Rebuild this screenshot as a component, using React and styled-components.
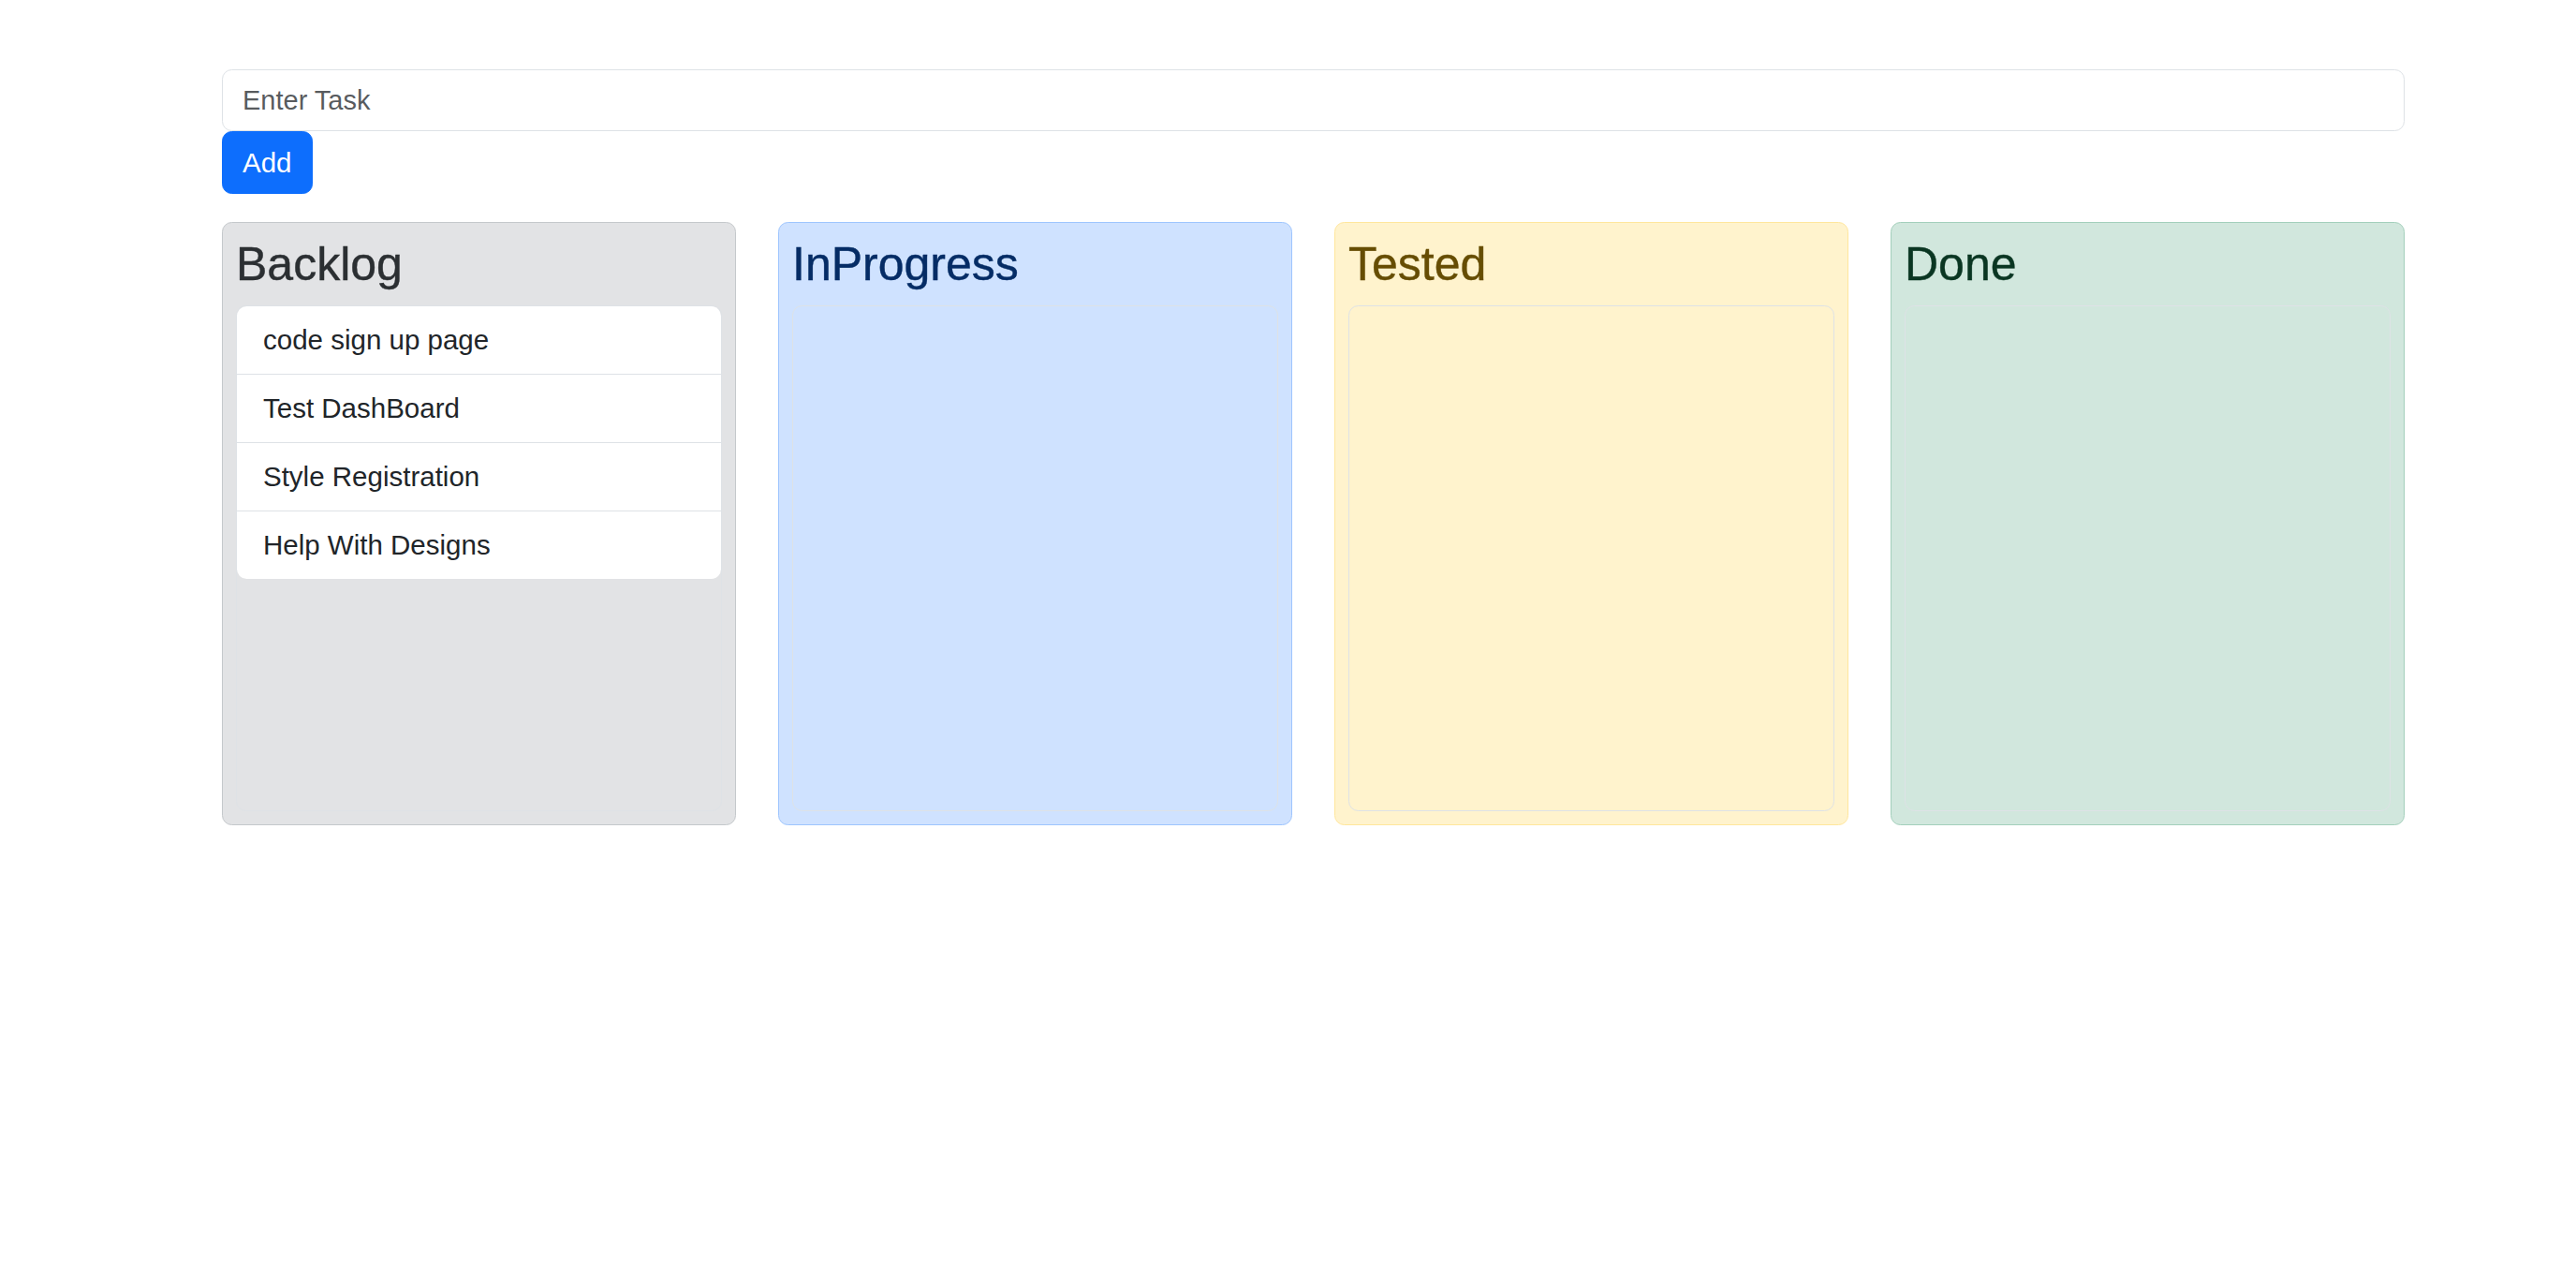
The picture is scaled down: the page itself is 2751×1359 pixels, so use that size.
import React from "react";
import styled, { createGlobalStyle } from "styled-components";

const GlobalStyle = createGlobalStyle`
  * { box-sizing: border-box; }
  html, body { margin: 0; padding: 0; background: #ffffff; }
  body {
    font-family: "Liberation Sans", Arial, Helvetica, sans-serif;
    color: #212529;
    font-size: 28px;
    line-height: 1.5;
  }
`;

const Page = styled.div`
  width: 2331px;
  margin-left: 237px;
  padding-top: 74px;
`;

const TaskForm = styled.form`
  display: flex;
  flex-direction: column;
  align-items: flex-start;
`;

const TaskInput = styled.input`
  display: block;
  width: 100%;
  height: 66px;
  padding: 10.5px 21px;
  font-family: inherit;
  font-size: 29px;
  line-height: 1.5;
  color: #212529;
  background: #ffffff;
  border: 1px solid #dee2e6;
  border-radius: 10.5px;
  outline: none;
  &::placeholder {
    color: rgba(33, 37, 41, 0.75);
  }
`;

const AddButton = styled.button`
  height: 67px;
  padding: 10.5px 21px;
  font-family: inherit;
  font-size: 29.5px;
  line-height: 1.5;
  color: #ffffff;
  background: #0d6efd;
  border: 1px solid #0d6efd;
  border-radius: 10.5px;
  cursor: pointer;
`;

const Board = styled.div`
  display: grid;
  grid-template-columns: repeat(4, 1fr);
  column-gap: 45px;
  margin-top: 30px;
`;

const palettes = {
  secondary: { bg: "#e2e3e5", border: "#c4c8cb", text: "#2b2f32" },
  primary: { bg: "#cfe2ff", border: "#9ec5fe", text: "#052c65" },
  warning: { bg: "#fff3cd", border: "#ffe69c", text: "#664d03" },
  success: { bg: "#d1e7dd", border: "#a3cfbb", text: "#0a3622" },
};

const Column = styled.section`
  display: flex;
  flex-direction: column;
  height: 644px;
  padding: 14px;
  background: ${(p) => palettes[p.$tone].bg};
  border: 1px solid ${(p) => palettes[p.$tone].border};
  border-radius: 10.5px;
  color: ${(p) => palettes[p.$tone].text};
`;

const ColumnTitle = styled.h3`
  margin: 1px 0 14px;
  font-size: 50px;
  font-weight: 500;
  line-height: 59px;
  -webkit-text-stroke: 0.4px currentColor;
`;

const DropZone = styled.div`
  flex: 1;
  border: 1px solid #dee2e6;
  border-radius: 10.5px;
`;

const TaskList = styled.ul`
  list-style: none;
  margin: 0;
  padding: 0;
  background: #ffffff;
  border-radius: 10.5px;
  overflow: hidden;
`;

const TaskItem = styled.li`
  padding: 15px 28px;
  font-size: 29.5px;
  line-height: 42px;
  color: #212529;
  border-top: 1px solid #dee2e6;
  &:first-child {
    border-top: none;
  }
`;

const columns = [
  {
    title: "Backlog",
    tone: "secondary",
    tasks: ["code sign up page", "Test DashBoard", "Style Registration", "Help With Designs"],
  },
  { title: "InProgress", tone: "primary", tasks: [] },
  { title: "Tested", tone: "warning", tasks: [] },
  { title: "Done", tone: "success", tasks: [] },
];

export default function App() {
  return (
    <>
      <GlobalStyle />
      <Page>
        <TaskForm onSubmit={(e) => e.preventDefault()}>
          <TaskInput type="text" placeholder="Enter Task" />
          <AddButton type="submit">Add</AddButton>
        </TaskForm>
        <Board>
          {columns.map((col) => (
            <Column key={col.title} $tone={col.tone}>
              <ColumnTitle>{col.title}</ColumnTitle>
              <DropZone>
                {col.tasks.length > 0 && (
                  <TaskList>
                    {col.tasks.map((t) => (
                      <TaskItem key={t}>{t}</TaskItem>
                    ))}
                  </TaskList>
                )}
              </DropZone>
            </Column>
          ))}
        </Board>
      </Page>
    </>
  );
}
